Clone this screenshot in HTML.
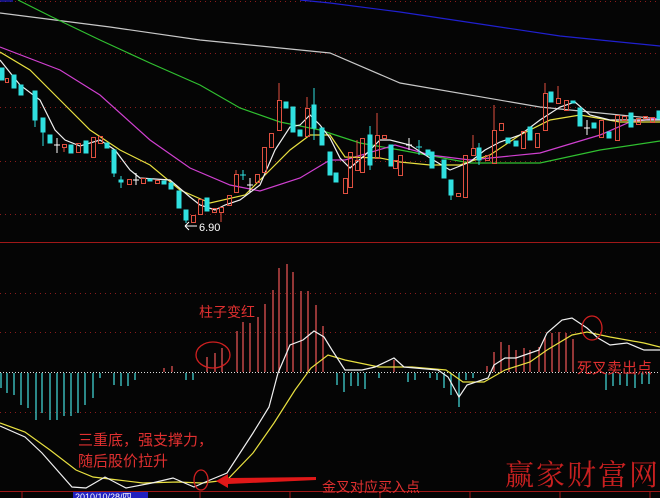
<!DOCTYPE html>
<html><head><meta charset="utf-8"><style>
html,body{margin:0;padding:0;background:#000;width:660px;height:498px;overflow:hidden}
svg{display:block}
.t{font-family:"Liberation Sans","Noto Sans CJK SC",sans-serif;fill:#e03030}
</style></head><body>
<svg width="660" height="498" viewBox="0 0 660 498" xmlns="http://www.w3.org/2000/svg">
<rect width="660" height="498" fill="#050505"/>
<g stroke="#8a1c1c" stroke-width="1" stroke-dasharray="1,4">
<line x1="0" y1="1.5" x2="660" y2="1.5"/><line x1="0" y1="53.5" x2="660" y2="53.5"/><line x1="0" y1="107.5" x2="660" y2="107.5"/><line x1="0" y1="161.5" x2="660" y2="161.5"/><line x1="0" y1="214.5" x2="660" y2="214.5"/>
<line x1="0" y1="293.5" x2="660" y2="293.5"/><line x1="0" y1="332.5" x2="660" y2="332.5"/><line x1="0" y1="412.5" x2="660" y2="412.5"/>
</g>
<line x1="0" y1="242.5" x2="660" y2="242.5" stroke="#a01818"/>
<line x1="0" y1="491.5" x2="660" y2="491.5" stroke="#a01818"/>
<g stroke="#a01818"><line x1="22" y1="492" x2="22" y2="498"/><line x1="110" y1="492" x2="110" y2="498"/><line x1="200" y1="492" x2="200" y2="498"/><line x1="290" y1="492" x2="290" y2="498"/><line x1="380" y1="492" x2="380" y2="498"/><line x1="470" y1="492" x2="470" y2="498"/><line x1="560" y1="492" x2="560" y2="498"/><line x1="650" y1="492" x2="650" y2="498"/></g>
<line x1="0" y1="372.5" x2="660" y2="372.5" stroke="#ddd" stroke-dasharray="1,2"/>
<!-- MAs -->
<g fill="none" stroke-width="1.2">
<polyline stroke="#2020d0" points="0,1 13,1 M300,0" />
<polyline stroke="#2020d0" points="300,0 330,3 400,12 480,24 560,36 660,46"/>
<polyline stroke="#c8c8c8" points="0,13 110,27 200,40 330,53 400,83 540,107 600,113 660,119"/>
<polyline stroke="#30c030" points="18,0 50,16 100,40 150,63 200,85 240,108 280,122 320,130 360,143 400,150 470,163 540,163 600,150 660,141"/>
<polyline stroke="#d040d0" points="0,47 60,70 100,95 150,140 190,168 230,185 260,191 300,178 330,160 345,160 395,145 430,155 470,160 540,153 600,135 630,122 660,118"/>
<polyline stroke="#e8e040" points="0,52 30,70 60,100 90,130 120,150 150,165 180,190 210,203 245,195 270,170 290,150 310,135 330,135 345,157 380,158 400,162 430,165 460,165 490,155 520,135 550,120 580,115 620,122 660,122"/>
<polyline stroke="#f0f0f0" points="0,60 20,85 40,100 55,130 65,140 80,146 100,140 115,150 130,170 140,178 170,180 190,197 200,205 215,210 225,205 240,200 260,185 275,150 290,127 300,125 310,115 320,125 330,138 340,158 350,168 365,155 380,140 390,140 410,145 430,158 450,170 470,162 485,150 500,142 520,135 540,120 560,107 575,102 590,115 610,120 630,120 660,120"/>
</g>
<!-- candles cyan -->
<g fill="#30e0e0" stroke="#30e0e0">
<rect x="0" y="68" width="4" height="12"/><rect x="12" y="75" width="4" height="13"/><rect x="19" y="85" width="4" height="10"/>
<rect x="33" y="91" width="4" height="29"/><line x1="35" y1="120" x2="35" y2="127"/>
<rect x="41" y="118" width="4" height="14"/><line x1="43" y1="132" x2="43" y2="146"/>
<rect x="48" y="135" width="4" height="8"/><rect x="69" y="145" width="4" height="8"/><rect x="84" y="141" width="4" height="12"/>
<rect x="105" y="143" width="4" height="5"/><rect x="112" y="150" width="4" height="23"/><line x1="114" y1="173" x2="114" y2="177"/>
<rect x="119" y="180" width="4" height="2"/><line x1="121" y1="176" x2="121" y2="188"/>
<rect x="148" y="179" width="4" height="2"/><rect x="162" y="181" width="4" height="3"/><rect x="169" y="183" width="4" height="6"/>
<rect x="177" y="191" width="4" height="17"/><rect x="184" y="210" width="4" height="10"/><line x1="186" y1="220" x2="186" y2="223"/>
<rect x="205" y="198" width="4" height="13"/><line x1="243" y1="170" x2="243" y2="180"/><line x1="240" y1="175" x2="246" y2="175"/>
<rect x="284" y="102" width="4" height="6"/><rect x="291" y="107" width="4" height="25"/><rect x="298" y="130" width="4" height="6"/>
<rect x="312" y="105" width="4" height="23"/><line x1="314" y1="88" x2="314" y2="140"/><rect x="320" y="128" width="4" height="17"/>
<rect x="328" y="152" width="4" height="23"/><rect x="334" y="173" width="4" height="9"/>
<rect x="368" y="135" width="4" height="30"/><line x1="370" y1="126" x2="370" y2="170"/><rect x="389" y="145" width="4" height="21"/>
<line x1="419" y1="140" x2="419" y2="155"/><line x1="416" y1="147" x2="422" y2="147"/>
<rect x="426" y="150" width="4" height="5"/><rect x="430" y="152" width="4" height="16"/><rect x="442" y="160" width="4" height="18"/>
<rect x="449" y="180" width="4" height="15"/><line x1="451" y1="195" x2="451" y2="200"/><rect x="477" y="148" width="4" height="12"/><line x1="479" y1="143" x2="479" y2="165"/>
<rect x="506" y="138" width="4" height="5"/><rect x="514" y="141" width="4" height="5"/><rect x="528" y="127" width="4" height="13"/>
<rect x="549" y="92" width="4" height="10"/><rect x="571" y="101" width="4" height="2"/><rect x="578" y="108" width="4" height="18"/>
<rect x="592" y="123" width="4" height="5"/><rect x="607" y="132" width="4" height="6"/><rect x="629" y="113" width="4" height="14"/><rect x="657" y="111" width="3" height="8"/>
</g>
<!-- candles red -->
<g fill="none" stroke="#e05040">
<rect x="5.5" y="78.5" width="3" height="4"/><rect x="62.5" y="144.5" width="4" height="3"/><line x1="64" y1="147" x2="64" y2="152"/>
<rect x="76.5" y="143.5" width="4" height="9"/><rect x="91.5" y="137.5" width="4" height="20"/><rect x="98.5" y="136.5" width="4" height="7"/>
<rect x="127.5" y="179.5" width="4" height="5"/><rect x="141.5" y="178.5" width="4" height="5"/><rect x="155.5" y="180.5" width="4" height="3"/>
<rect x="191.5" y="215.5" width="4" height="7"/><rect x="198.5" y="199.5" width="4" height="15"/><rect x="212.5" y="208.5" width="4" height="4"/>
<rect x="219.5" y="207.5" width="4" height="5"/><line x1="221" y1="212" x2="221" y2="222"/><rect x="227.5" y="195.5" width="4" height="10"/>
<rect x="234.5" y="174.5" width="4" height="18"/><line x1="236" y1="170" x2="236" y2="174"/><rect x="255.5" y="174.5" width="4" height="8"/>
<rect x="262.5" y="147.5" width="4" height="25"/><rect x="269.5" y="133.5" width="4" height="14"/><rect x="277.5" y="100.5" width="4" height="30"/><line x1="279" y1="83" x2="279" y2="100"/>
<rect x="305.5" y="108.5" width="4" height="28"/><line x1="307" y1="97" x2="307" y2="108"/>
<rect x="343.5" y="178.5" width="4" height="15"/><rect x="348.5" y="152.5" width="4" height="35"/><rect x="355.5" y="160.5" width="4" height="10"/><line x1="357" y1="140" x2="357" y2="160"/>
<rect x="360.5" y="138.5" width="4" height="34"/><rect x="375.5" y="135.5" width="4" height="23"/><line x1="377" y1="113" x2="377" y2="135"/>
<rect x="382.5" y="135.5" width="4" height="3"/><rect x="393.5" y="160.5" width="4" height="8"/><rect x="398.5" y="155.5" width="4" height="20"/>
<rect x="456.5" y="193.5" width="4" height="3"/><rect x="463.5" y="155.5" width="4" height="42"/><rect x="471.5" y="148.5" width="4" height="7"/><line x1="473" y1="135" x2="473" y2="148"/>
<rect x="485.5" y="155.5" width="4" height="5"/><rect x="492.5" y="130.5" width="4" height="33"/><line x1="494" y1="105" x2="494" y2="130"/>
<rect x="499.5" y="123.5" width="4" height="7"/><rect x="521.5" y="131.5" width="4" height="17"/><rect x="535.5" y="133.5" width="4" height="14"/>
<rect x="543.5" y="93.5" width="4" height="37"/><line x1="545" y1="83" x2="545" y2="93"/><rect x="556.5" y="98.5" width="4" height="5"/><line x1="558" y1="86" x2="558" y2="98"/>
<rect x="564.5" y="100.5" width="4" height="10"/><rect x="599.5" y="120.5" width="4" height="17"/><rect x="615.5" y="115.5" width="4" height="25"/>
<rect x="622.5" y="116.5" width="4" height="4"/><rect x="636.5" y="118.5" width="4" height="6"/><rect x="643.5" y="116.5" width="4" height="2"/><rect x="650.5" y="117.5" width="4" height="5"/>
</g>
<g stroke="#fff"><line x1="57" y1="138" x2="57" y2="153"/><line x1="54" y1="145" x2="60" y2="145"/><line x1="136" y1="173" x2="136" y2="185"/><line x1="133" y1="180" x2="139" y2="180"/><line x1="250" y1="178" x2="250" y2="192"/><line x1="247" y1="185" x2="253" y2="185"/><line x1="409" y1="138" x2="409" y2="150"/><line x1="406" y1="145" x2="412" y2="145"/><line x1="587" y1="120" x2="587" y2="135"/><line x1="584" y1="128" x2="590" y2="128"/></g>
<path d="M185 226 H197 M185 226 L189 222 M185 226 L189 230" stroke="#fff" fill="none"/>
<text x="199" y="231" font-family="Liberation Sans,sans-serif" font-size="11" fill="#fff">6.90</text>
<!-- MACD histogram -->
<g stroke="#40d0d0" stroke-width="1.3">
<line x1="1" y1="373" x2="1" y2="388"/><line x1="7" y1="373" x2="7" y2="393"/><line x1="14" y1="373" x2="14" y2="395"/><line x1="21" y1="373" x2="21" y2="405"/><line x1="28" y1="373" x2="28" y2="408"/><line x1="36" y1="373" x2="36" y2="420"/><line x1="42" y1="373" x2="42" y2="413"/><line x1="50" y1="373" x2="50" y2="420"/><line x1="57" y1="373" x2="57" y2="420"/><line x1="64" y1="373" x2="64" y2="416"/><line x1="71" y1="373" x2="71" y2="416"/><line x1="78" y1="373" x2="78" y2="413"/><line x1="85" y1="373" x2="85" y2="405"/><line x1="93" y1="373" x2="93" y2="398"/><line x1="100" y1="373" x2="100" y2="378"/>
<line x1="114" y1="373" x2="114" y2="385"/><line x1="121" y1="373" x2="121" y2="386"/><line x1="128" y1="373" x2="128" y2="386"/><line x1="135" y1="373" x2="135" y2="380"/><line x1="186" y1="373" x2="186" y2="380"/><line x1="193" y1="373" x2="193" y2="380"/>
<line x1="337" y1="373" x2="337" y2="385"/><line x1="344" y1="373" x2="344" y2="392"/><line x1="351" y1="373" x2="351" y2="386"/><line x1="358" y1="373" x2="358" y2="386"/><line x1="365" y1="373" x2="365" y2="389"/><line x1="379" y1="373" x2="379" y2="378"/>
<line x1="408" y1="373" x2="408" y2="382"/><line x1="415" y1="373" x2="415" y2="380"/><line x1="430" y1="373" x2="430" y2="378"/><line x1="437" y1="373" x2="437" y2="380"/><line x1="444" y1="373" x2="444" y2="388"/><line x1="451" y1="373" x2="451" y2="395"/><line x1="459" y1="373" x2="459" y2="407"/><line x1="466" y1="373" x2="466" y2="380"/><line x1="473" y1="373" x2="473" y2="378"/>
<line x1="606" y1="373" x2="606" y2="390"/><line x1="613" y1="373" x2="613" y2="386"/><line x1="620" y1="373" x2="620" y2="385"/><line x1="627" y1="373" x2="627" y2="386"/><line x1="635" y1="373" x2="635" y2="388"/><line x1="642" y1="373" x2="642" y2="384"/><line x1="649" y1="373" x2="649" y2="384"/>
</g>
<g stroke="#e05050" stroke-width="1.3">
<line x1="164" y1="372" x2="164" y2="368"/><line x1="172" y1="372" x2="172" y2="366"/><line x1="207" y1="372" x2="207" y2="357"/><line x1="215" y1="372" x2="215" y2="353"/><line x1="222" y1="372" x2="222" y2="348"/><line x1="237" y1="372" x2="237" y2="331"/><line x1="243" y1="372" x2="243" y2="322"/><line x1="250" y1="372" x2="250" y2="323"/><line x1="258" y1="372" x2="258" y2="317"/><line x1="265" y1="372" x2="265" y2="304"/><line x1="273" y1="372" x2="273" y2="290"/><line x1="279" y1="372" x2="279" y2="268"/><line x1="287" y1="372" x2="287" y2="264"/><line x1="293" y1="372" x2="293" y2="272"/><line x1="301" y1="372" x2="301" y2="291"/><line x1="308" y1="372" x2="308" y2="291"/><line x1="316" y1="372" x2="316" y2="305"/><line x1="323" y1="372" x2="323" y2="326"/>
<line x1="394" y1="372" x2="394" y2="360"/><line x1="487" y1="372" x2="487" y2="366"/>
<line x1="494" y1="372" x2="494" y2="352"/><line x1="501" y1="372" x2="501" y2="342"/><line x1="509" y1="372" x2="509" y2="345"/><line x1="516" y1="372" x2="516" y2="350"/><line x1="524" y1="372" x2="524" y2="348"/><line x1="530" y1="372" x2="530" y2="350"/><line x1="539" y1="372" x2="539" y2="347"/><line x1="545" y1="372" x2="545" y2="337"/><line x1="552" y1="372" x2="552" y2="333"/><line x1="559" y1="372" x2="559" y2="332"/><line x1="566" y1="372" x2="566" y2="333"/><line x1="573" y1="372" x2="573" y2="339"/>
</g>
<g fill="none" stroke-width="1.2">
<polyline stroke="#e8e040" points="0,423 25,432 50,450 76,470 93,477 118,480 143,483 177,482 202,483 227,480 253,453 274,423 295,390 311,368 328,355 345,360 379,367 412,367 446,370 463,382 484,382 505,370 530,362 547,350 572,335 587,332 610,337 644,343 660,347"/>
<polyline stroke="#f0f0f0" points="0,426 25,437 42,453 72,487 86,488 105,477 126,488 152,483 173,478 194,487 210,480 227,473 253,433 269,407 278,373 290,345 303,340 314,331 324,337 332,350 345,370 362,370 375,367 394,358 404,367 438,370 448,377 459,397 467,385 488,378 494,365 505,358 516,358 539,350 547,333 562,320 572,318 587,328 598,338 610,345 627,343 644,350 660,350"/>
</g>
<g fill="none" stroke="#d02020" stroke-width="1.3">
<ellipse cx="213" cy="355" rx="17" ry="13"/><ellipse cx="592" cy="328" rx="10" ry="12"/><ellipse cx="201" cy="480" rx="7" ry="10"/>
</g>
<path d="M216 481 L228 474 L228 478 L316 477 L316 480 L228 484 L228 488 Z" fill="#e01818"/>
<text class="t" x="199" y="317" font-size="14">柱子变红</text>
<text class="t" x="78" y="445" font-size="15">三重底，强支撑力，</text>
<text class="t" x="78" y="466" font-size="15">随后股价拉升</text>
<text class="t" x="577" y="373" font-size="15">死叉卖出点</text>
<text class="t" x="322" y="492" font-size="14">金叉对应买入点</text>
<text x="505" y="485" font-size="29" font-family="'Noto Serif CJK SC','WenQuanYi Zen Hei',serif" fill="#c82020" letter-spacing="2">赢家财富网</text>
<rect x="73" y="492" width="75" height="6" fill="#2020c0"/>
<text x="75" y="500" font-size="9" font-family="Liberation Sans,sans-serif" fill="#fff">2010/10/28/四</text>
</svg>
</body></html>
